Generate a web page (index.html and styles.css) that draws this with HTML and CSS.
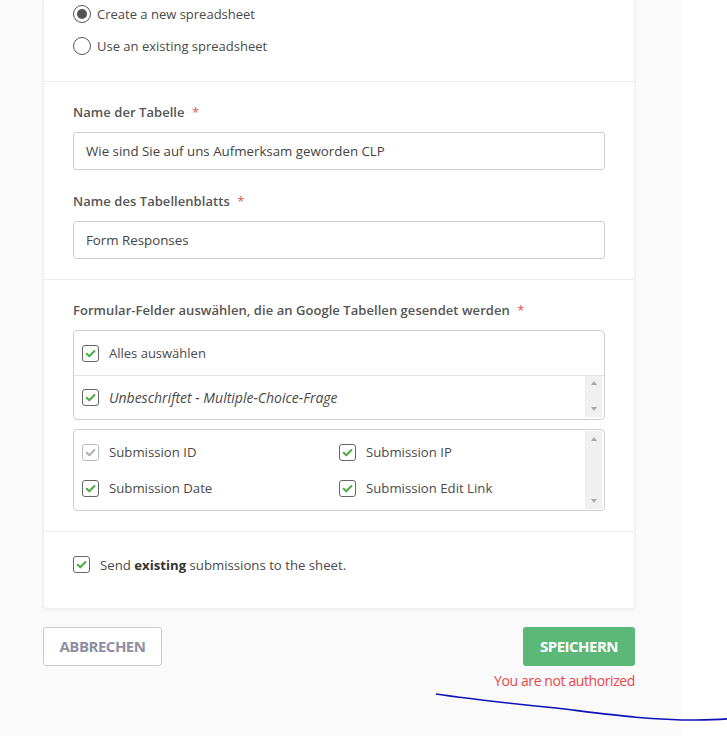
FILE: index.html
```html
<!DOCTYPE html>
<html lang="de">
<head>
<meta charset="utf-8">
<title>Google Sheets</title>
<link rel="stylesheet" href="styles.css">
</head>
<body>
<div class="page">
  <div class="card">
    <div class="section radios">
      <label class="radio-row"><span class="radio checked"></span>Create a new spreadsheet</label>
      <label class="radio-row"><span class="radio"></span>Use an existing spreadsheet</label>
    </div>
    <div class="section fields">
      <div class="field">
        <div class="label">Name der Tabelle <span class="req">*</span></div>
        <div class="input">Wie sind Sie auf uns Aufmerksam geworden CLP</div>
      </div>
      <div class="field">
        <div class="label">Name des Tabellenblatts <span class="req">*</span></div>
        <div class="input">Form Responses</div>
      </div>
    </div>
    <div class="section select-fields">
      <div class="label">Formular-Felder auswählen, die an Google Tabellen gesendet werden <span class="req">*</span></div>
      <div class="box box-one">
        <div class="box-row head"><span class="cb"><svg viewBox="0 0 16 16"><path d="M4 8.3l2.7 2.7L12.2 5.3"/></svg></span>Alles auswählen</div>
        <div class="box-row scroll-row">
          <div class="row-main"><span class="cb"><svg viewBox="0 0 16 16"><path d="M4 8.3l2.7 2.7L12.2 5.3"/></svg></span><em>Unbeschriftet - Multiple-Choice-Frage</em></div>
          <div class="scrollbar short"><span class="arr up"></span><span class="arr down"></span></div>
        </div>
      </div>
      <div class="box box-two">
        <div class="grid">
          <div class="cell"><span class="cb disabled"><svg viewBox="0 0 16 16"><path d="M4 8.3l2.7 2.7L12.2 5.3"/></svg></span>Submission ID</div>
          <div class="cell"><span class="cb"><svg viewBox="0 0 16 16"><path d="M4 8.3l2.7 2.7L12.2 5.3"/></svg></span>Submission IP</div>
          <div class="cell"><span class="cb"><svg viewBox="0 0 16 16"><path d="M4 8.3l2.7 2.7L12.2 5.3"/></svg></span>Submission Date</div>
          <div class="cell"><span class="cb"><svg viewBox="0 0 16 16"><path d="M4 8.3l2.7 2.7L12.2 5.3"/></svg></span>Submission Edit Link</div>
        </div>
        <div class="scrollbar tall"><span class="arr up"></span><span class="arr down"></span></div>
      </div>
    </div>
    <div class="section existing">
      <div class="cell"><span class="cb"><svg viewBox="0 0 16 16"><path d="M4 8.3l2.7 2.7L12.2 5.3"/></svg></span>Send&nbsp;<b>existing</b>&nbsp;submissions to the sheet.</div>
    </div>
  </div>
  <div class="actions">
    <button class="btn btn-cancel">ABBRECHEN</button>
    <div class="save-col">
      <button class="btn btn-save">SPEICHERN</button>
      <div class="error">You are not authorized</div>
    </div>
  </div>
  <svg class="scribble" viewBox="0 0 300 40" width="300" height="40">
    <path d="M0 4 C 40 10, 80 14, 120 18 C 170 24, 210 30, 260 30 C 280 30, 292 29, 300 28"/>
  </svg>
</div>
</body>
</html>
```
FILE: styles.css
```css
* { box-sizing: border-box; }
html, body { margin: 0; padding: 0; background: #ffffff; }
body {
  font-family: "Open Sans", "Noto Sans", "DejaVu Sans", sans-serif;
  font-size: 13px;
  color: #4a4a4a;
}
.page {
  position: relative;
  width: 681px;
  min-height: 736px;
  background: #fafafa;
  padding: 0 46px 0 43px;
}
.card {
  width: 592px;
  background: #fff;
  border-radius: 0 0 4px 4px;
  box-shadow: 0 1px 3px rgba(0,0,0,0.07);
  border: 1px solid #f0f0f0;
  border-top: none;
}
.section { padding: 0 29px; border-top: 1px solid #ebebeb; }
.section:first-child { border-top: none; }
.radios { padding-top: 3px; padding-bottom: 24px; }
.radio-row { display: flex; align-items: center; height: 22px; margin-bottom: 10px; }
.radio-row:last-child { margin-bottom: 0; }
.radio {
  width: 18px; height: 18px; border: 1px solid #555; border-radius: 50%;
  margin-right: 6px; display: inline-flex; align-items: center; justify-content: center;
}
.radio.checked::after {
  content: ""; width: 10px; height: 10px; border-radius: 50%; background: #555;
}
.fields { padding-top: 21px; padding-bottom: 20px; }
.field + .field { margin-top: 22px; }
.label { font-weight: 600; color: #555; font-size: 13px; line-height: 18px; margin-bottom: 11px; letter-spacing: 0.05px; }
.req { color: #e05555; margin-left: 4px; font-weight: 400; }
.input {
  height: 38px; border: 1px solid #cfcfcf; border-radius: 3px;
  padding: 0 12px; display: flex; align-items: center; color: #444; font-size: 13.3px;
}
.select-fields { padding-top: 21px; padding-bottom: 20px; }
.box { border: 1px solid #cfcfcf; border-radius: 4px; background: #fff; }
.box-one { margin-bottom: 9px; }
.box-row { display: flex; align-items: center; }
.box-row.head { height: 45px; padding-left: 8px; border-bottom: 1px solid #e5e5e5; }
.scroll-row { height: 43px; }
.row-main { flex: 1; display: flex; align-items: center; padding-left: 8px; }
.row-main em { color: #4a4a4a; font-size: 14px; }
.scrollbar {
  width: 17px; background: #f0f0f0; display: flex; flex-direction: column;
  justify-content: space-between; align-items: center;
}
.scrollbar.short { height: 41px; margin-right: 2px; padding: 5px 0 6px; align-self: flex-start; }
.scrollbar.tall { height: 78px; margin: 1px 2px 1px 0; padding: 6px 0 6px; }
.arr { width: 0; height: 0; border-left: 3.5px solid transparent; border-right: 3.5px solid transparent; }
.arr.up { border-bottom: 4px solid #a8a8a8; }
.arr.down { border-top: 4px solid #a8a8a8; }
.box-two { display: flex; height: 82px; }
.grid {
  flex: 1; display: grid; grid-template-columns: 257px 1fr; grid-auto-rows: 36px;
  padding: 4px 0 0 8px;
}
.cell { display: flex; align-items: center; color: #4a4a4a; font-size: 13.2px; }
.cell b { color: #333; font-weight: 700; }
.cb {
  width: 17px; height: 17px; border: 1px solid #666; border-radius: 3px;
  margin-right: 10px; display: inline-flex; flex: none;
}
.cb svg { width: 15px; height: 15px; fill: none; stroke: #4fad47; stroke-width: 2.2; stroke-linecap: round; stroke-linejoin: round; }
.cb.disabled { border-color: #bdbdbd; }
.cb.disabled svg { stroke: #b0b0b0; }
.existing { padding-top: 23px; padding-bottom: 34px; }
.existing .cell { height: 19px; }
.existing .cb { margin-right: 10px; }
.actions {
  width: 592px; display: flex; justify-content: space-between; align-items: flex-start;
  margin-top: 18px;
}
.btn {
  font-family: "Open Sans", sans-serif; font-weight: 700; font-size: 15px;
  letter-spacing: -0.5px; height: 39px; border-radius: 3px; cursor: pointer; padding: 0 0 1px;
}
.btn-cancel { width: 119px; background: #fff; color: #8f8fa3; border: 1px solid #c9c9d6; }
.btn-save { width: 112px; background: #5cb878; color: #fff; border: none; }
.save-col { display: flex; flex-direction: column; align-items: flex-end; }
.error { color: #e8474a; font-size: 14px; margin-top: 5px; letter-spacing: -0.4px; }
.scribble { position: absolute; left: 436px; top: 690px; overflow: visible; }
.scribble path { fill: none; stroke: #1010b8; stroke-width: 1.6; }
```
